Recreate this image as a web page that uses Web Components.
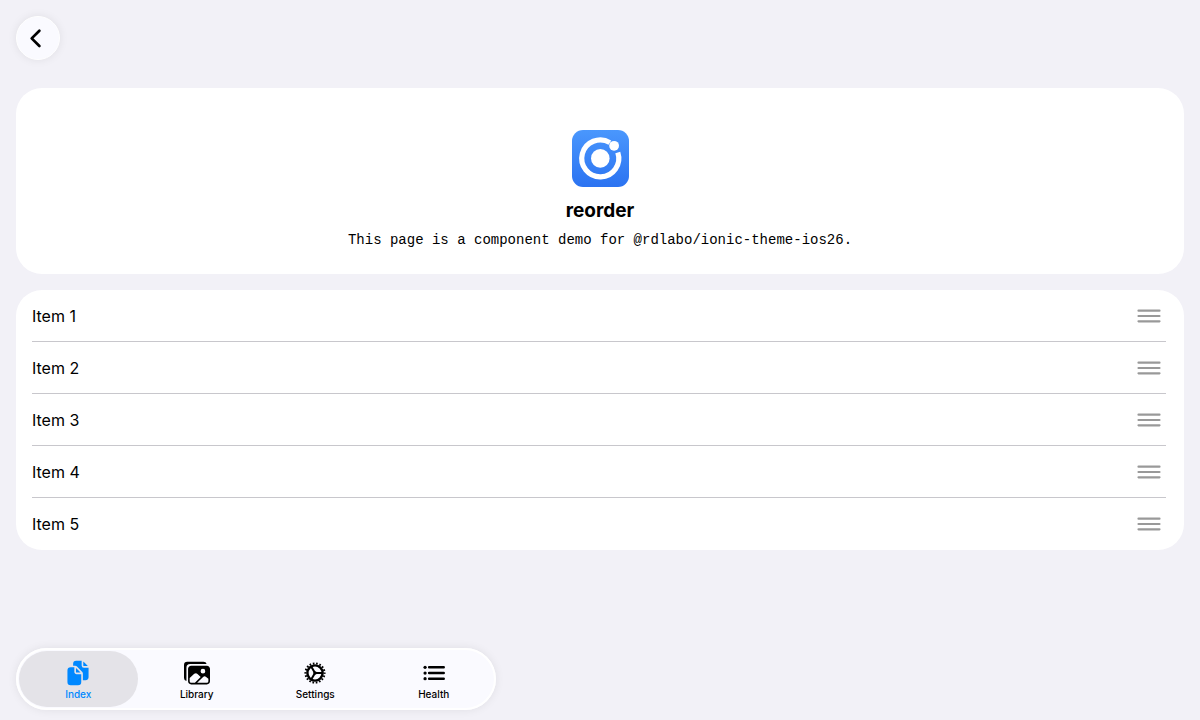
<!DOCTYPE html>
<html lang="en">
<head>
<meta charset="utf-8">
<meta name="viewport" content="width=device-width, initial-scale=1">
<title>reorder</title>
<style>
  html, body { height: 100%; margin: 0; }
  body { background: #f2f1f7; color: #000; font-family: Inter, sans-serif; }
</style>
</head>
<body>
<demo-page>
  <back-button slot="header"></back-button>
  <intro-card heading="reorder">This page is a component demo for @rdlabo/ionic-theme-ios26.</intro-card>
  <reorder-list>
    <reorder-item>Item 1</reorder-item>
    <reorder-item>Item 2</reorder-item>
    <reorder-item>Item 3</reorder-item>
    <reorder-item>Item 4</reorder-item>
    <reorder-item>Item 5</reorder-item>
  </reorder-list>
  <tab-bar slot="footer">
    <tab-button icon="documents" selected>Index</tab-button>
    <tab-button icon="images">Library</tab-button>
    <tab-button icon="cog">Settings</tab-button>
    <tab-button icon="list">Health</tab-button>
  </tab-bar>
</demo-page>

<script>
const define = (name, render) => customElements.define(name, class extends HTMLElement {
  connectedCallback() {
    if (!this.shadowRoot) this.attachShadow({ mode: "open" }).innerHTML = render(this);
  }
});

const icons = {
  documents: `<path d="M298.39 248a4 4 0 002.86-6.8l-78.4-79.72a4 4 0 00-6.85 2.81V236a12 12 0 0012 12z"/><path d="M197 267a43.67 43.67 0 01-13-31v-92h-72a64.19 64.19 0 00-64 64v224a64 64 0 0064 64h144a64 64 0 0064-64V280h-92a43.61 43.61 0 01-31-13zm175-147h70.39a4 4 0 002.86-6.8l-78.4-79.72a4 4 0 00-6.85 2.81V108a12 12 0 0012 12z"/><path d="M372 152a44.34 44.34 0 01-44-44V16H220a60.07 60.07 0 00-60 60v36h42.12A40.81 40.81 0 01231 124.14l109.16 111a41.11 41.11 0 0111.83 29V400h53.05c32.51 0 58.95-26.92 58.95-60V152z"/>`,
  images: `<path d="M450.29 112H142c-34 0-62 27.51-62 61.33v245.34c0 33.82 28 61.33 62 61.33h308c34 0 62-26.18 62-60V173.33c0-33.82-27.68-61.33-61.71-61.33zm-77.15 61.34a46 46 0 11-46.28 46 46.19 46.19 0 0146.28-46.01zm-231.55 276c-17 0-29.86-13.75-29.86-30.66v-64.83l90.46-80.79a46.54 46.54 0 0163.44 1.83L328.27 337l-113 112.33zM480 418.67a30.67 30.67 0 01-30.71 30.66H259L376.08 333a46.24 46.24 0 0159.44-.16L480 370.59z"/><path d="M384 32H64A64 64 0 000 96v256a64.11 64.11 0 0048 62V152a72 72 0 0172-72h326a64.11 64.11 0 00-62-48z"/>`,
  cog: `<g fill="none" stroke="currentColor"><circle cx="256" cy="256" r="150" stroke-width="48"/><circle cx="256" cy="256" r="188" stroke-width="40" pathLength="36" stroke-dasharray="1 1" stroke-dashoffset=".5"/><path d="M256 256h150M256 256l-75-130M256 256l-75 130" stroke-width="40"/></g><circle cx="256" cy="256" r="34"/>`,
  list: `<g fill="none" stroke="currentColor" stroke-width="48" stroke-linecap="round"><path d="M160 144h288M160 256h288M160 368h288"/></g><circle cx="80" cy="144" r="32"/><circle cx="80" cy="256" r="32"/><circle cx="80" cy="368" r="32"/>`
};

define("demo-page", () => `
  <style>
    :host { display: flex; flex-direction: column; gap: 28px; box-sizing: border-box; min-height: 100%; padding: 16px 16px 10px; }
    main { display: flex; flex-direction: column; gap: 16px; flex: 1; }
    header, footer { display: flex; }
  </style>
  <header><slot name="header"></slot></header>
  <main><slot></slot></main>
  <footer><slot name="footer"></slot></footer>`);

define("back-button", () => `
  <style>
    :host { display: block; }
    button { display: grid; place-items: center; width: 44px; height: 44px; padding: 0 4px 0 0; border: 1px solid #fff; border-radius: 50%; background: #fafaff; color: #000; box-shadow: 0 0 10px #00000014; box-sizing: border-box; }
    svg { display: block; width: 24px; height: 24px; }
  </style>
  <button type="button" aria-label="Back">
    <svg viewBox="0 0 512 512" aria-hidden="true"><path d="M328 100 164 264l164 164" fill="none" stroke="currentColor" stroke-width="58" stroke-linecap="round" stroke-linejoin="round"/></svg>
  </button>`);

define("app-logo", () => `
  <style>
    :host { display: block; }
    svg { display: block; width: 57px; height: 57px; }
  </style>
  <svg viewBox="0 0 57 57" aria-hidden="true">
    <defs><linearGradient id="sky" x2="0" y2="1"><stop stop-color="#4a97fd"/><stop offset="1" stop-color="#2b73f1"/></linearGradient></defs>
    <rect width="57" height="57" rx="11" fill="url(#sky)"/>
    <circle cx="28.300" cy="28.400" r="9.300" fill="#fff"/>
    <path d="M37.900 12.600A18.500 18.500 0 1 0 45.800 22.500" fill="none" stroke="#fff" stroke-width="5.200"/>
    <circle cx="42.100" cy="15.800" r="4.900" fill="#fff"/>
  </svg>`);

define("intro-card", el => `
  <style>
    :host { display: block; }
    section { display: flex; flex-direction: column; align-items: center; padding: 42px 16px 24px; border-radius: 26px; background: #fff; text-align: center; }
    h1 { margin: 12px 0 7px; font-size: 19px; line-height: 24px; font-weight: 700; }
    p { margin: 0; font: 14px/20px "Liberation Mono", monospace; }
  </style>
  <section>
    <app-logo></app-logo>
    <h1>${el.getAttribute("heading")}</h1>
    <p><slot></slot></p>
  </section>`);

define("reorder-list", () => `
  <style>
    :host { display: block; }
    div { border-radius: 26px; background: #fff; overflow: hidden; }
    ::slotted(:not(:last-child)) { --divider: #c8c7cc; }
  </style>
  <div role="list"><slot></slot></div>`);

define("reorder-item", () => `
  <style>
    :host { display: block; padding: 0 18px 0 16px; }
    div { display: flex; align-items: center; justify-content: space-between; box-sizing: border-box; height: 52px; padding-right: 1px; border-bottom: 1px solid var(--divider, transparent); font-size: 16px; line-height: 24px; }
    button { padding: 0; border: 0; background: none; color: #999; cursor: grab; }
    svg { display: block; width: 32px; height: 32px; }
  </style>
  <div role="listitem">
    <span><slot></slot></span>
    <button type="button" aria-label="Reorder">
      <svg viewBox="0 0 32 32" aria-hidden="true"><path d="M5.500 10.700h21M5.500 16h21M5.500 21.300h21" fill="none" stroke="currentColor" stroke-width="2.200" stroke-linecap="round"/></svg>
    </button>
  </div>`);

define("tab-bar", () => `
  <style>
    :host { display: block; flex: 0 1 480px; }
    nav { display: grid; grid-template-columns: repeat(4, 1fr); padding: 3px; border-radius: 31px; background: #fafaff; box-shadow: inset 0 0 0 2px #fff, 0 0 10px #00000014; }
  </style>
  <nav aria-label="Main"><slot></slot></nav>`);

define("tab-button", el => `
  <style>
    :host { display: block; }
    button { display: flex; flex-direction: column; align-items: center; gap: 1px; width: 100%; height: 56px; padding: 9px 0 0; border: 0; border-radius: 28px; background: none; color: #000; font: 500 10px/14px Inter, sans-serif; }
    :host([selected]) button { background: #e4e3e8; color: #0088ff; }
    svg { display: block; width: 26px; height: 26px; fill: currentColor; }
  </style>
  <button type="button"${el.hasAttribute("selected") ? ' aria-current="page"' : ""}>
    <svg viewBox="0 0 512 512" aria-hidden="true">${icons[el.getAttribute("icon")]}</svg>
    <span><slot></slot></span>
  </button>`);
</script>
</body>
</html>
